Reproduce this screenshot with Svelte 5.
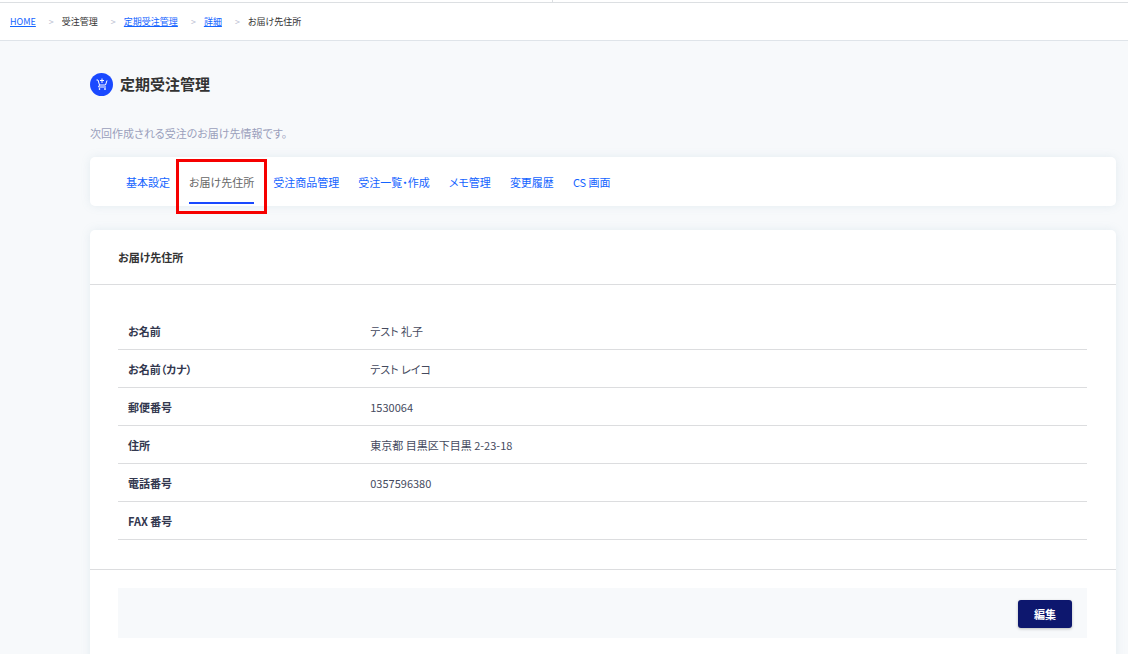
<script>
  const crumbs = [
    { label: 'HOME', href: '#home' },
    { label: '受注管理' },
    { label: '定期受注管理', href: '#subscriptions' },
    { label: '詳細', href: '#detail' },
    { label: 'お届け先住所' }
  ];

  const tabs = [
    { id: 'basic', label: '基本設定' },
    { id: 'address', label: 'お届け先住所' },
    { id: 'items', label: '受注商品管理' },
    { id: 'orders', label: '受注一覧・作成' },
    { id: 'memo', label: 'メモ管理' },
    { id: 'history', label: '変更履歴' },
    { id: 'cs', label: 'CS 画面' }
  ];

  const rows = [
    ['お名前', 'テスト 礼子'],
    ['お名前（カナ）', 'テスト レイコ'],
    ['郵便番号', '1530064'],
    ['住所', '東京都 目黒区下目黒 2-23-18'],
    ['電話番号', '0357596380'],
    ['FAX 番号', '']
  ];

  let active = $state('address');
</script>

<div class="topbar"><span class="topbar-cell"></span></div>

<nav class="breadcrumb" aria-label="breadcrumb">
  {#each crumbs as crumb, i}
    {#if i > 0}<span class="sep" aria-hidden="true">&gt;</span>{/if}
    {#if crumb.href}
      <a href={crumb.href}>{crumb.label}</a>
    {:else}
      <span>{crumb.label}</span>
    {/if}
  {/each}
</nav>

<main>
  <header class="title">
    <span class="title-icon">
      <svg viewBox="0 0 24 24" fill="none" stroke="currentColor" stroke-width="2" aria-hidden="true">
        <path d="M1 4h3l3 10h12l3-9M7 14l-2 4h15M12 1v9M8 5h8" />
        <circle cx="7" cy="22" r="1" fill="currentColor" />
        <circle cx="18" cy="22" r="1" fill="currentColor" />
      </svg>
    </span>
    <h1>定期受注管理</h1>
  </header>

  <p class="lead">次回作成される受注のお届け先情報です。</p>

  <nav class="card tabs">
    {#each tabs as tab}
      <a
        href="#{tab.id}"
        class:active={active === tab.id}
        onclick={() => (active = tab.id)}
      >{tab.label}</a>
    {/each}
  </nav>

  <section class="card">
    <h2>お届け先住所</h2>

    <div class="card-body">
      <table>
        <tbody>
          {#each rows as [name, value]}
            <tr>
              <th scope="row">{name}</th>
              <td>{value}</td>
            </tr>
          {/each}
        </tbody>
      </table>
    </div>

    <div class="card-footer">
      <div class="actions">
        <button type="button">編集</button>
      </div>
    </div>
  </section>
</main>

<style>
  :global(body) {
    background: #f7f9fb;
    color: #333;
    font-family: 'Noto Sans CJK JP', 'Noto Sans', sans-serif;
    font-size: 11px;
    line-height: 18px;
    font-feature-settings: 'palt';
    overflow: hidden;
  }

  a {
    color: #1464ff;
  }

  .topbar {
    height: 2px;
    background: #fff;
    border-bottom: 1px solid #dcdfe2;
  }

  .topbar-cell {
    display: block;
    width: 49%;
    height: 2px;
    border-right: 1px solid #dcdfe2;
    box-sizing: border-box;
  }

  .breadcrumb {
    display: flex;
    align-items: center;
    height: 37px;
    padding: 0 10px;
    background: #fff;
    border-bottom: 1px solid #dfe4e9;
    font-size: 9px;
  }

  .sep {
    padding: 0 8px 0 13px;
    color: #b9bdd0;
    font-size: 9px;
  }

  main {
    padding: 31px 12px 0 90px;
  }

  .title {
    display: flex;
    align-items: center;
    gap: 7px;
  }

  .title-icon {
    display: grid;
    place-items: center;
    width: 23px;
    height: 23px;
    border-radius: 50%;
    background: #1a49ff;
    color: #fff;
  }

  .title-icon svg {
    width: 12px;
    height: 12px;
  }

  h1 {
    margin: 0;
    font-size: 15px;
    line-height: 24px;
    font-weight: 700;
  }

  .lead {
    margin: 28px 0 15px;
    color: #9a9fbc;
  }

  .card {
    background: #fff;
    border-radius: 5px;
    box-shadow: 0 0 10px rgba(120, 160, 180, 0.15);
  }

  .tabs {
    display: flex;
    gap: 19px;
    height: 49px;
    padding: 0 36px;
    margin-bottom: 24px;
  }

  .tabs a {
    position: relative;
    height: 45px;
    line-height: 50px;
    text-decoration: none;
    border-bottom: 2px solid transparent;
  }

  .tabs a.active {
    color: #666;
    border-bottom-color: #1a49ff;
  }

  .tabs a.active::after {
    content: '';
    position: absolute;
    inset: 2px -13px -12px;
    border: 3px solid #f60000;
  }

  h2 {
    margin: 0;
    padding: 18px 28px;
    border-bottom: 1px solid #dcdddf;
    font-size: 11px;
    line-height: 18px;
    font-weight: 700;
  }

  .card-body {
    padding: 27px 29px 29px 28px;
    border-bottom: 1px solid #dcdddf;
  }

  table {
    width: 100%;
    border-collapse: separate;
    border-spacing: 0;
    table-layout: fixed;
  }

  th,
  td {
    height: 37px;
    padding: 0 10px;
    border-bottom: 1px solid #dcdddf;
    text-align: left;
    color: #33384f;
  }

  th {
    width: 25%;
    box-sizing: border-box;
    height: 38px;
    font-weight: 700;
  }

  td {
    color: #454a5e;
  }

  .card-footer {
    padding: 18px 29px 28px 28px;
  }

  .actions {
    display: flex;
    justify-content: flex-end;
    padding: 12px 15px 10px;
    background: #f7f9fb;
  }

  button {
    padding: 5px 16px;
    border: 0;
    border-radius: 3px;
    background: #0d176e;
    color: #fff;
    font: inherit;
    font-weight: 700;
    box-shadow: 0 1px 3px rgba(0, 0, 0, 0.25);
    cursor: pointer;
  }
</style>
